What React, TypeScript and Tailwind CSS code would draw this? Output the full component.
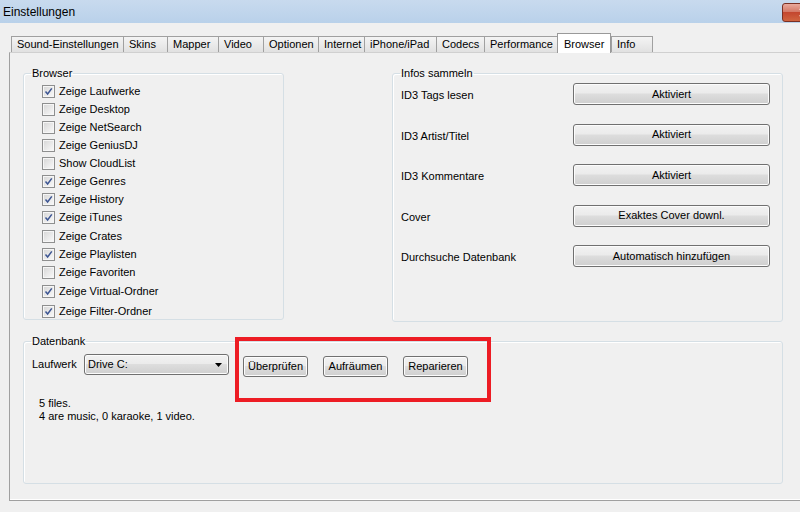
import React from "react";

const tabs = [
  { label: "Sound-Einstellungen", w: "w-[112px]" },
  { label: "Skins", w: "w-[44px]" },
  { label: "Mapper", w: "w-[51px]" },
  { label: "Video", w: "w-[45px]" },
  { label: "Optionen", w: "w-[55px]" },
  { label: "Internet", w: "w-[46px]" },
  { label: "iPhone/iPad", w: "w-[72px]" },
  { label: "Codecs", w: "w-[48px]" },
  { label: "Performance", w: "w-[73px]" },
  { label: "Browser", w: "w-[54px]", active: true },
  { label: "Info", w: "w-[42px]", last: true },
];

const browserItems = [
  { label: "Zeige Laufwerke", checked: true, mt: "" },
  { label: "Zeige Desktop", checked: false, mt: "" },
  { label: "Zeige NetSearch", checked: false, mt: "" },
  { label: "Zeige GeniusDJ", checked: false, mt: "" },
  { label: "Show CloudList", checked: false, mt: "" },
  { label: "Zeige Genres", checked: true, mt: "" },
  { label: "Zeige History", checked: true, mt: "" },
  { label: "Zeige iTunes", checked: true, mt: "" },
  { label: "Zeige Crates", checked: false, mt: "mt-[1px]" },
  { label: "Zeige Playlisten", checked: true, mt: "" },
  { label: "Zeige Favoriten", checked: false, mt: "" },
  { label: "Zeige Virtual-Ordner", checked: true, mt: "mt-[1px]" },
  { label: "Zeige Filter-Ordner", checked: true, mt: "mt-[2px]" },
];

const infoRows = [
  { label: "ID3 Tags lesen", value: "Aktiviert" },
  { label: "ID3 Artist/Titel", value: "Aktiviert" },
  { label: "ID3 Kommentare", value: "Aktiviert" },
  { label: "Cover", value: "Exaktes Cover downl." },
  { label: "Durchsuche Datenbank", value: "Automatisch hinzufügen" },
];

const btnClass =
  "flex items-center justify-center rounded-[3px] border border-[#707070] bg-[linear-gradient(#f2f2f2,#ebebeb_45%,#dddddd_50%,#cfcfcf)] text-[11px] text-black shadow-[inset_0_0_0_1px_#fcfcfc]";

function Checkbox({ checked }: { checked: boolean }) {
  return (
    <span className="flex h-[13px] w-[13px] shrink-0 items-center justify-center border border-[#8e8f8f] bg-[#f6f6f6] p-[1px]">
      <span className="relative h-full w-full bg-linear-to-br from-[#d9d9d9] to-[#f7f7f7]">
        {checked && (
          <svg viewBox="0 0 9 9" className="absolute inset-0 h-full w-full">
            <path
              d="M1.5 4.6 L3.6 7 L7.8 1.4"
              fill="none"
              stroke="#3d5693"
              strokeWidth="1.5"
            />
          </svg>
        )}
      </span>
    </span>
  );
}

function GroupBox({
  title,
  className,
  children,
}: {
  title: string;
  className: string;
  children: React.ReactNode;
}) {
  return (
    <fieldset
      className={`shrink-0 rounded-[3px] border border-[#d5dfe5] pl-[7px] shadow-[inset_1px_1px_0_#fff] ${className}`}
    >
      <legend className="px-[1px] text-[11px] leading-[14px] text-black">
        {title}
      </legend>
      {children}
    </fieldset>
  );
}

export default function App() {
  return (
    <div className="relative h-[512px] w-[800px] overflow-hidden bg-[#f0f0f0] font-['Liberation_Sans',Arial,sans-serif] text-black">
      {/* title bar */}
      <div className="flex h-[23px] items-center bg-linear-to-b from-[#c8daee] to-[#b9d1ea] pl-[3px]">
        <span className="text-[12px]">Einstellungen</span>
        <div className="-mr-[26px] ml-auto mt-[1px] flex h-[19px] w-[44px] shrink-0 items-center justify-center rounded-[3px] border border-[#7a3024] bg-[linear-gradient(#e9a99c,#d47a68_45%,#c4472f_50%,#d0643f)]">
          <svg viewBox="0 0 10 9" className="h-[9px] w-[10px]">
            <path
              d="M1 0.5 L9 8.5 M9 0.5 L1 8.5"
              stroke="#fff"
              strokeWidth="2.2"
            />
          </svg>
        </div>
      </div>

      <div className="pl-[9px] pt-[10px]">
        {/* tab strip */}
        <div className="ml-[2px] flex h-[19px] items-end">
          {tabs.map((t) =>
            t.active ? (
              <div
                key={t.label}
                className={`${t.w} relative z-10 -mb-[1px] flex h-[20px] shrink-0 items-start border-x border-t border-[#999] bg-white pl-[6px] pt-[2px] text-[11px]`}
              >
                {t.label}
              </div>
            ) : (
              <div
                key={t.label}
                className={`${t.w} flex h-[16px] shrink-0 items-center border-l border-t border-[#a0a0a0] bg-linear-to-b from-[#f4f4f4] to-[#e1e1e1] pl-[5px] text-[11px] ${t.last ? "border-r" : ""}`}
              >
                {t.label}
              </div>
            )
          )}
        </div>

        {/* tab page */}
        <div className="h-[449px] w-[800px] border-b border-l border-t border-[#a0a0a0] border-t-[#d0d0d0] pl-[13px] pt-[13px] shadow-[inset_0_-1px_0_#fff]">
          <div className="flex items-start">
            <GroupBox title="Browser" className="h-[254px] w-[261px]">
              <div className="flex flex-col pt-[2px]">
                {browserItems.map((item) => (
                  <div
                    key={item.label}
                    className={`flex h-[18px] items-center gap-[4px] pl-[11px] text-[11px] ${item.mt}`}
                  >
                    <Checkbox checked={item.checked} />
                    <span>{item.label}</span>
                  </div>
                ))}
              </div>
            </GroupBox>

            <GroupBox title="Infos sammeln" className="ml-[108px] h-[256px] w-[391px]">
              <div className="flex flex-col gap-[18.5px] pt-[3px]">
                {infoRows.map((row) => (
                  <div key={row.label} className="flex h-[22px] items-center">
                    <span className="ml-[1px] mt-[3px] w-[172px] text-[11px]">
                      {row.label}
                    </span>
                    <button type="button" className={`${btnClass} h-[22px] w-[197px]`}>
                      {row.value}
                    </button>
                  </div>
                ))}
              </div>
            </GroupBox>
          </div>

          <GroupBox title="Datenbank" className="mt-[12px] h-[150px] w-[760px]">
            <div className="flex items-start pt-[6px]">
              <span className="ml-[1px] flex h-[21px] w-[52px] items-center text-[11px]">
                Laufwerk
              </span>
              <div className="flex h-[21px] w-[145px] items-center justify-between rounded-[3px] border border-[#707070] bg-[linear-gradient(#f2f2f2,#ebebeb_45%,#dddddd_50%,#cfcfcf)] pl-[3px] pr-[6px] text-[11px] shadow-[inset_0_0_0_1px_#fcfcfc]">
                <span>Drive C:</span>
                <svg viewBox="0 0 7 4" className="h-[4px] w-[7px]">
                  <path d="M0 0 H7 L3.5 4 Z" fill="#000" />
                </svg>
              </div>
              <button type="button" className={`${btnClass} ml-[14px] mt-[2px] h-[21px] w-[65px]`}>
                Überprüfen
              </button>
              <button type="button" className={`${btnClass} ml-[15px] mt-[2px] h-[21px] w-[65px]`}>
                Aufräumen
              </button>
              <button type="button" className={`${btnClass} ml-[15px] mt-[2px] h-[21px] w-[65px]`}>
                Reparieren
              </button>
            </div>
            <div className="ml-[8px] mt-[20px] text-[11px] leading-[12.5px]">
              <div>5 files.</div>
              <div>4 are music, 0 karaoke, 1 video.</div>
            </div>
          </GroupBox>
        </div>
      </div>

      {/* annotation */}
      <div className="absolute left-[235px] top-[337px] h-[65px] w-[256px] border-[4px] border-[#ed1c24]" />
    </div>
  );
}
